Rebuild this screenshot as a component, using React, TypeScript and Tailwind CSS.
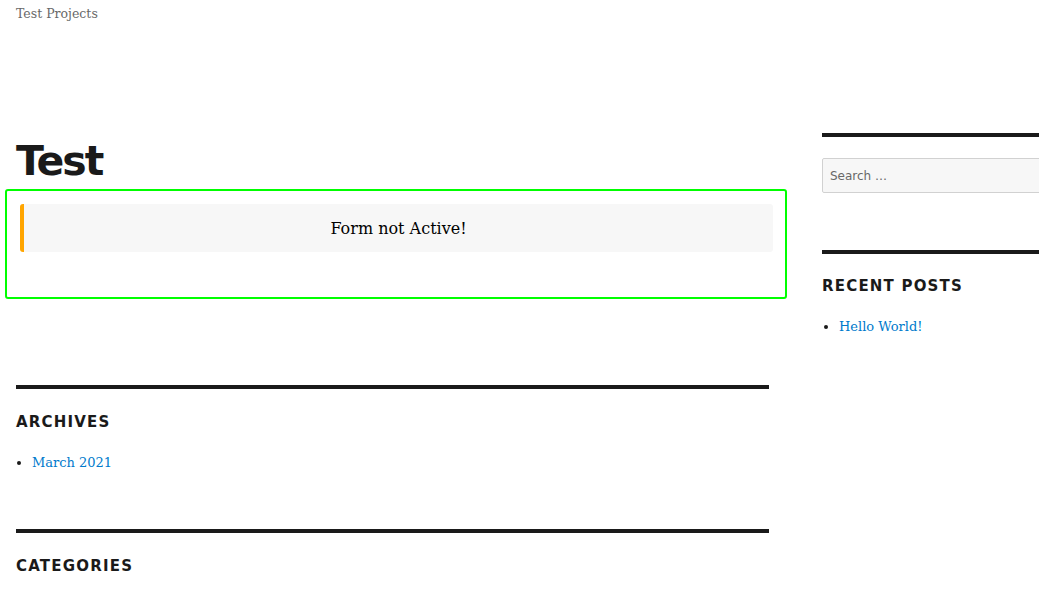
import React from 'react';

const sans = "font-['DejaVu_Sans',sans-serif]";
const serif = "font-['DejaVu_Serif',serif]";

const WidgetTitle: React.FC<{ children: React.ReactNode }> = ({ children }) => (
  <h2 className={`${sans} text-[15px] font-bold uppercase tracking-[1.2px] leading-[20px] text-[#1a1a1a]`}>{children}</h2>
);

const App: React.FC = () => {
  return (
    <div className="w-[1053px] h-[614px] overflow-hidden bg-white text-[#1a1a1a]">
      {/* Header */}
      <header className="h-[133px] pl-4 pt-[5px]">
        <p className={`${serif} text-[12.5px] leading-[18px] text-[#686868]`}>Test Projects</p>
      </header>

      <div className="flex">
        {/* Main column */}
        <main className="ml-4 w-[753px] shrink-0">
          <h1 className={`${sans} mt-[7px] text-[41px] font-bold leading-[42px] tracking-[-2px] text-[#1a1a1a]`}>Test</h1>

          <div className="mt-[7px] -ml-[11px] w-[782px] h-[110px] rounded-[3px] border-2 border-[#0f0] pt-[13px] pl-[13px]">
            <div className="flex h-12 w-[753px] items-center justify-center rounded-[3px] border-l-4 border-[#ffa500] bg-[#f7f7f7]">
              <p className={`${serif} pt-px text-[16px] text-black`}>Form not Active!</p>
            </div>
          </div>

          <section className="mt-[86px] border-t-4 border-[#1a1a1a] pt-[23px]">
            <WidgetTitle>Archives</WidgetTitle>
            <ul className="mt-[20px] list-disc pl-4 marker:text-[#1a1a1a]">
              <li className={`${serif} text-[13px] leading-[22px] text-[#1a1a1a]`}>
                <span className="text-[#007acc]">March 2021</span>
              </li>
            </ul>
          </section>

          <section className="mt-[55px] border-t-4 border-[#1a1a1a] pt-[23px]">
            <WidgetTitle>Categories</WidgetTitle>
          </section>
        </main>

        {/* Sidebar */}
        <aside className="ml-[53px] w-[217px] shrink-0 overflow-hidden">
          <div className="w-[260px]">
            <div className="border-t-4 border-[#1a1a1a] pt-[21px]">
              <div className={`${sans} flex h-[35px] w-[260px] items-center rounded-[2px] border border-[#d1d1d1] bg-[#f7f7f7] pl-[7px] text-[12px] text-[#686868]`}>
                Search …
              </div>
            </div>

            <section className="mt-[57px] border-t-4 border-[#1a1a1a] pt-[22px]">
              <WidgetTitle>Recent Posts</WidgetTitle>
              <ul className="mt-[20px] list-disc pl-[17px]">
                <li className={`${serif} text-[13px] leading-[22px] text-[#1a1a1a]`}>
                  <span className="text-[#007acc]">Hello World!</span>
                </li>
              </ul>
            </section>
          </div>
        </aside>
      </div>
    </div>
  );
};

export default App;
